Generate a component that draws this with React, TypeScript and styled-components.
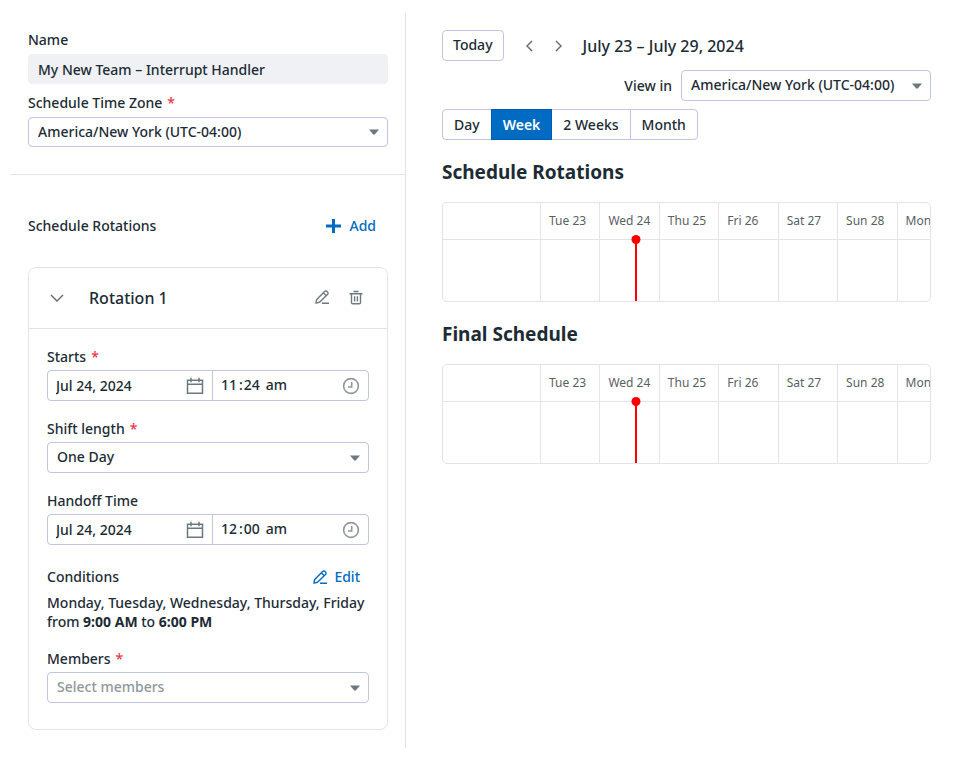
import React, { useId } from "react";
import styled, { createGlobalStyle, css } from "styled-components";

const color = {
  text: "#1c2b34",
  muted: "#585f63",
  icon: "#6c7a80",
  placeholder: "#8f979b",
  border: "#c1c5e0",
  line: "#e1e3ee",
  blue: "#006bc2",
  danger: "#eb364b",
};

const GlobalStyle = createGlobalStyle`
  *, *::before, *::after { box-sizing: border-box; }
  body {
    margin: 0;
    background: #fff;
    color: ${color.text};
    font-family: "Noto Sans", sans-serif;
    font-size: 14px;
    font-weight: 500;
    line-height: 20px;
  }
  button, input, select { font: inherit; color: inherit; }
`;

const Page = styled.main`
  display: grid;
  grid-template-columns: minmax(0, 396fr) minmax(0, 525fr);
  min-height: calc(100vh - 9px);
  padding: 13px 28px 9px 10px;
`;

const Sidebar = styled.div`
  border-right: 1px solid ${color.line};
  padding-bottom: 18px;
`;

const SidebarSection = styled.section`
  padding: 17px 17px 0 18px;
`;

const Settings = styled(SidebarSection)`
  display: grid;
  gap: 9px;
  padding-bottom: 27px;
  border-bottom: 1px solid ${color.line};
`;

const FieldBox = styled.div<{ $gap: number }>`
  display: grid;
  gap: ${(p) => p.$gap}px;
`;

const Required = styled.span`
  margin-left: 5px;
  color: ${color.danger};
`;

const controlBox = css`
  width: 100%;
  border: 1px solid ${color.border};
  border-radius: 4px;
  background: #fff;
`;

const NameInput = styled.input`
  width: 100%;
  height: 30px;
  padding: 0 10px;
  border: 0;
  border-radius: 4px;
  background: #f0f1f5;
`;

const SelectWrap = styled.div`
  position: relative;
`;

const SelectBox = styled.select<{ $height: number; $placeholder?: boolean }>`
  ${controlBox}
  display: block;
  height: ${(p) => p.$height}px;
  padding: 0 30px 1px 9px;
  appearance: none;
  color: ${(p) => (p.$placeholder ? color.placeholder : color.text)};
`;

const CaretSlot = styled.span`
  position: absolute;
  inset: 0 8px 0 auto;
  display: flex;
  align-items: center;
  pointer-events: none;
`;

const Svg = styled.svg`
  display: block;
  flex: none;
`;

const SectionHead = styled.div`
  display: flex;
  align-items: center;
  justify-content: space-between;
  margin: 18px 0 25px;
  padding-right: 12px;
  height: 32px;
`;

const LinkButton = styled.button`
  display: flex;
  align-items: center;
  gap: 7px;
  padding: 0;
  border: 0;
  background: none;
  color: ${color.blue};
  cursor: pointer;
`;

const Card = styled.article`
  border: 1px solid ${color.line};
  border-radius: 8px;
`;

const CardHead = styled.header`
  display: flex;
  align-items: center;
  height: 61px;
  padding: 0 23px 0 20px;
  border-bottom: 1px solid ${color.line};
`;

const CardTitle = styled.h3`
  flex: 1;
  margin: 0 0 0 24px;
  font-size: 16px;
  font-weight: 500;
`;

const IconButton = styled.button`
  display: flex;
  padding: 0;
  border: 0;
  background: none;
  color: ${color.icon};
  cursor: pointer;
`;

const CardActions = styled.div`
  display: flex;
  gap: 19px;
`;

const CardBody = styled.div`
  display: grid;
  gap: 18px;
  padding: 18px 18px 26px;
`;

const DateTime = styled.div`
  ${controlBox}
  display: grid;
  grid-template-columns: 164fr 156fr;
  height: 31px;
`;

const DatePart = styled.div`
  display: flex;
  align-items: center;
  padding: 0 8px;
  min-width: 0;
`;

const TimePart = styled(DatePart)`
  border-left: 1px solid ${color.border};
`;

const BareInput = styled.input`
  flex: 1;
  min-width: 0;
  padding: 0;
  border: 0;
  background: none;
`;

const Segments = styled.div`
  display: flex;
  flex: 1;
  gap: 1px;
  padding-bottom: 2px;
`;

const Segment = styled.input<{ $wide?: boolean }>`
  width: ${(p) => (p.$wide ? 24 : 17)}px;
  margin-left: ${(p) => (p.$wide ? 4 : 0)}px;
  padding: 0;
  border: 0;
  background: none;
`;

const Conditions = styled.section`
  display: grid;
  gap: 6px;
  padding-top: 4px;
`;

const ConditionsHead = styled.div`
  display: flex;
  align-items: center;
  justify-content: space-between;
  padding-right: 9px;
`;

const SubTitle = styled.h4`
  margin: 0;
  font-size: 14px;
  font-weight: 500;
`;

const ConditionText = styled.p`
  margin: 0;
  line-height: 19px;

  b { font-weight: 700; }
`;

const Content = styled.div`
  min-width: 0;
  padding: 17px 0 0 36px;
`;

const Toolbar = styled.div`
  display: flex;
  align-items: center;
  height: 31px;
`;

const TodayButton = styled.button`
  height: 31px;
  padding: 0 10px 2px;
  border: 1px solid ${color.border};
  border-radius: 4px;
  background: #fff;
`;

const Pager = styled.div`
  display: flex;
  gap: 18px;
  margin: 0 18px 0 19px;
`;

const RangeTitle = styled.h1`
  margin: 0;
  font-size: 16px;
  font-weight: 500;
`;

const ViewIn = styled.div`
  display: flex;
  align-items: center;
  justify-content: flex-end;
  gap: 9px;
  margin: 9px 0 8px;

  ${SelectWrap} { width: 250px; }
`;

const Tabs = styled.div`
  display: inline-flex;
  vertical-align: top;
`;

const Tab = styled.button<{ $active?: boolean }>`
  height: 31px;
  padding: 0 11px;
  border: 1px solid ${(p) => (p.$active ? "#0059b3" : color.border)};
  background: ${(p) => (p.$active ? color.blue : "#fff")};
  color: ${(p) => (p.$active ? "#fff" : color.text)};
  font-weight: ${(p) => (p.$active ? 600 : 500)};
  position: relative;
  z-index: ${(p) => (p.$active ? 1 : 0)};

  & + & { margin-left: -1px; }
  &:first-child { border-radius: 4px 0 0 4px; }
  &:last-child { border-radius: 0 4px 4px 0; }
`;

const Heading = styled.h2`
  margin: 18px 0 16px;
  font-size: 19px;
  line-height: 28px;
  font-weight: 700;
`;

const TimelineFrame = styled.div`
  overflow: hidden;
  border: 1px solid ${color.line};
  border-radius: 5px;
`;

const Timeline = styled.table`
  width: calc(100% + 26px);
  table-layout: fixed;
  border-collapse: separate;
  border-spacing: 0;
`;

const DayHead = styled.th`
  height: 37px;
  padding: 0 0 1px 8px;
  border-bottom: 1px solid ${color.line};
  color: ${color.muted};
  font-size: 12px;
  font-weight: 400;
  text-align: left;
  white-space: nowrap;

  & + & { border-left: 1px solid ${color.line}; }
`;

const Corner = styled(DayHead)`
  width: 97px;
`;

const Slot = styled.td`
  position: relative;
  height: 61px;
  padding: 0;

  & + & { border-left: 1px solid ${color.line}; }
`;

const NowMarker = styled.span`
  position: absolute;
  top: 0;
  bottom: 0;
  left: 60%;
  width: 2px;
  background: #f00;

  &::before {
    content: "";
    position: absolute;
    top: -5px;
    left: 50%;
    width: 9px;
    height: 9px;
    border-radius: 50%;
    background: #f00;
    transform: translateX(-50%);
  }
`;

const Caret = () => (
  <CaretSlot>
    <Svg width="12" height="6" viewBox="0 0 12 6" aria-hidden="true">
      <path d="M1 .5h10L7 5.200q-1 .9-2 0Z" fill={color.icon} />
    </Svg>
  </CaretSlot>
);

const Chevron = ({ d, width, height }: { d: string; width: number; height: number }) => (
  <Svg width={width} height={height} viewBox={`0 0 ${width} ${height}`} fill="none" stroke="#5c6970" strokeWidth="1.400" aria-hidden="true">
    <path d={d} />
  </Svg>
);

const PencilIcon = () => (
  <Svg width="14" height="14" viewBox="0 0 14 14" fill="none" stroke="currentColor" strokeWidth="1.400" strokeLinejoin="round" aria-hidden="true">
    <path d="M.9 13.100 1.700 9.600 9.600 1.500a1.700 1.700 0 0 1 2.500 0l.4.4a1.700 1.700 0 0 1 0 2.500L4.500 12.300Z" />
    <path d="m8.400 2.900 2.700 2.700M7 13.200h7" />
  </Svg>
);

const TrashIcon = () => (
  <Svg width="16" height="16" viewBox="0 0 16 16" fill="none" stroke="currentColor" strokeWidth="1.400" aria-hidden="true">
    <path d="M1.500 3.800h13M5.500 1.500h5M3.500 4v8.400q0 1.300 1.300 1.300h6.400q1.300 0 1.300-1.300V4M6.600 6.200v5.300M9.400 6.200v5.300" />
  </Svg>
);

const CalendarIcon = () => (
  <Svg width="18" height="18" viewBox="0 0 18 18" fill="none" stroke={color.icon} strokeWidth="1.500" aria-hidden="true">
    <path d="M1.500 3.200h15v13h-15ZM1.500 7.200h15M5 .8v4.500M13 .8v4.500" />
  </Svg>
);

const ClockIcon = () => (
  <Svg width="18" height="18" viewBox="0 0 18 18" fill="none" stroke={color.placeholder} strokeWidth="1.600" aria-hidden="true">
    <circle cx="9" cy="9" r="7.400" />
    <path d="M9.700 5v5H6" />
  </Svg>
);

const PlusIcon = () => (
  <Svg width="17" height="16" viewBox="0 0 17 16" fill="none" stroke="currentColor" strokeWidth="3" aria-hidden="true">
    <path d="M1 8h15M8.500 1v14" />
  </Svg>
);

type SelectFieldProps = { label: string; value: string; height: number; gap: number; required?: boolean; placeholder?: boolean };

function SelectField({ label, value, height, gap, required, placeholder }: SelectFieldProps) {
  const id = useId();
  return (
    <FieldBox $gap={gap}>
      <label htmlFor={id}>
        {label}
        {required && <Required>*</Required>}
      </label>
      <SelectWrap>
        <SelectBox id={id} $height={height} $placeholder={placeholder}>
          <option>{value}</option>
        </SelectBox>
        <Caret />
      </SelectWrap>
    </FieldBox>
  );
}

function DateTimeField({ label, date, hour, minute, required }: { label: string; date: string; hour: string; minute: string; required?: boolean }) {
  const id = useId();
  return (
    <FieldBox $gap={3}>
      <label htmlFor={id}>
        {label}
        {required && <Required>*</Required>}
      </label>
      <DateTime>
        <DatePart>
          <BareInput id={id} defaultValue={date} />
          <CalendarIcon />
        </DatePart>
        <TimePart>
          <Segments>
            <Segment aria-label={`${label} hour`} defaultValue={hour} />
            <span>:</span>
            <Segment aria-label={`${label} minute`} defaultValue={minute} />
            <Segment aria-label={`${label} am or pm`} defaultValue="am" $wide />
          </Segments>
          <ClockIcon />
        </TimePart>
      </DateTime>
    </FieldBox>
  );
}

const days = ["Tue 23", "Wed 24", "Thu 25", "Fri 26", "Sat 27", "Sun 28", "Mon 29"];
const today = "Wed 24";

function Schedule({ title }: { title: string }) {
  return (
    <section>
      <Heading>{title}</Heading>
      <TimelineFrame>
        <Timeline aria-label={title}>
          <thead>
            <tr>
              <Corner />
              {days.map((day) => (
                <DayHead key={day} scope="col">{day}</DayHead>
              ))}
            </tr>
          </thead>
          <tbody>
            <tr>
              <Slot />
              {days.map((day) => (
                <Slot key={day}>{day === today && <NowMarker />}</Slot>
              ))}
            </tr>
          </tbody>
        </Timeline>
      </TimelineFrame>
    </section>
  );
}

export default function App() {
  return (
    <>
      <GlobalStyle />
      <Page>
        <Sidebar>
          <Settings>
            <FieldBox $gap={4}>
              <label htmlFor="schedule-name">Name</label>
              <NameInput id="schedule-name" defaultValue="My New Team – Interrupt Handler" />
            </FieldBox>
            <SelectField label="Schedule Time Zone" value="America/New York (UTC-04:00)" height={30} gap={4} required />
          </Settings>
          <SidebarSection>
            <SectionHead>
              <span>Schedule Rotations</span>
              <LinkButton><PlusIcon />Add</LinkButton>
            </SectionHead>
            <Card>
              <CardHead>
                <IconButton aria-label="Collapse rotation">
                  <Chevron width={16} height={10} d="M2 2l6 6 6-6" />
                </IconButton>
                <CardTitle>Rotation 1</CardTitle>
                <CardActions>
                  <IconButton aria-label="Edit rotation"><PencilIcon /></IconButton>
                  <IconButton aria-label="Delete rotation"><TrashIcon /></IconButton>
                </CardActions>
              </CardHead>
              <CardBody>
                <DateTimeField label="Starts" date="Jul 24, 2024" hour="11" minute="24" required />
                <SelectField label="Shift length" value="One Day" height={31} gap={3} required />
                <DateTimeField label="Handoff Time" date="Jul 24, 2024" hour="12" minute="00" />
                <Conditions>
                  <ConditionsHead>
                    <SubTitle>Conditions</SubTitle>
                    <LinkButton><PencilIcon />Edit</LinkButton>
                  </ConditionsHead>
                  <ConditionText>
                    Monday, Tuesday, Wednesday, Thursday, Friday from <b>9:00 AM</b> to <b>6:00 PM</b>
                  </ConditionText>
                </Conditions>
                <SelectField label="Members" value="Select members" height={31} gap={3} required placeholder />
              </CardBody>
            </Card>
          </SidebarSection>
        </Sidebar>
        <Content>
          <Toolbar>
            <TodayButton>Today</TodayButton>
            <Pager>
              <IconButton aria-label="Previous week"><Chevron width={12} height={14} d="M9 2L4 7l5 5" /></IconButton>
              <IconButton aria-label="Next week"><Chevron width={12} height={14} d="M3 2l5 5-5 5" /></IconButton>
            </Pager>
            <RangeTitle>July 23 – July 29, 2024</RangeTitle>
          </Toolbar>
          <ViewIn>
            <label htmlFor="view-zone">View in</label>
            <SelectWrap>
              <SelectBox id="view-zone" $height={31}>
                <option>America/New York (UTC-04:00)</option>
              </SelectBox>
              <Caret />
            </SelectWrap>
          </ViewIn>
          <Tabs role="group" aria-label="Range">
            <Tab>Day</Tab>
            <Tab $active aria-pressed="true">Week</Tab>
            <Tab>2 Weeks</Tab>
            <Tab>Month</Tab>
          </Tabs>
          <Schedule title="Schedule Rotations" />
          <Schedule title="Final Schedule" />
        </Content>
      </Page>
    </>
  );
}
